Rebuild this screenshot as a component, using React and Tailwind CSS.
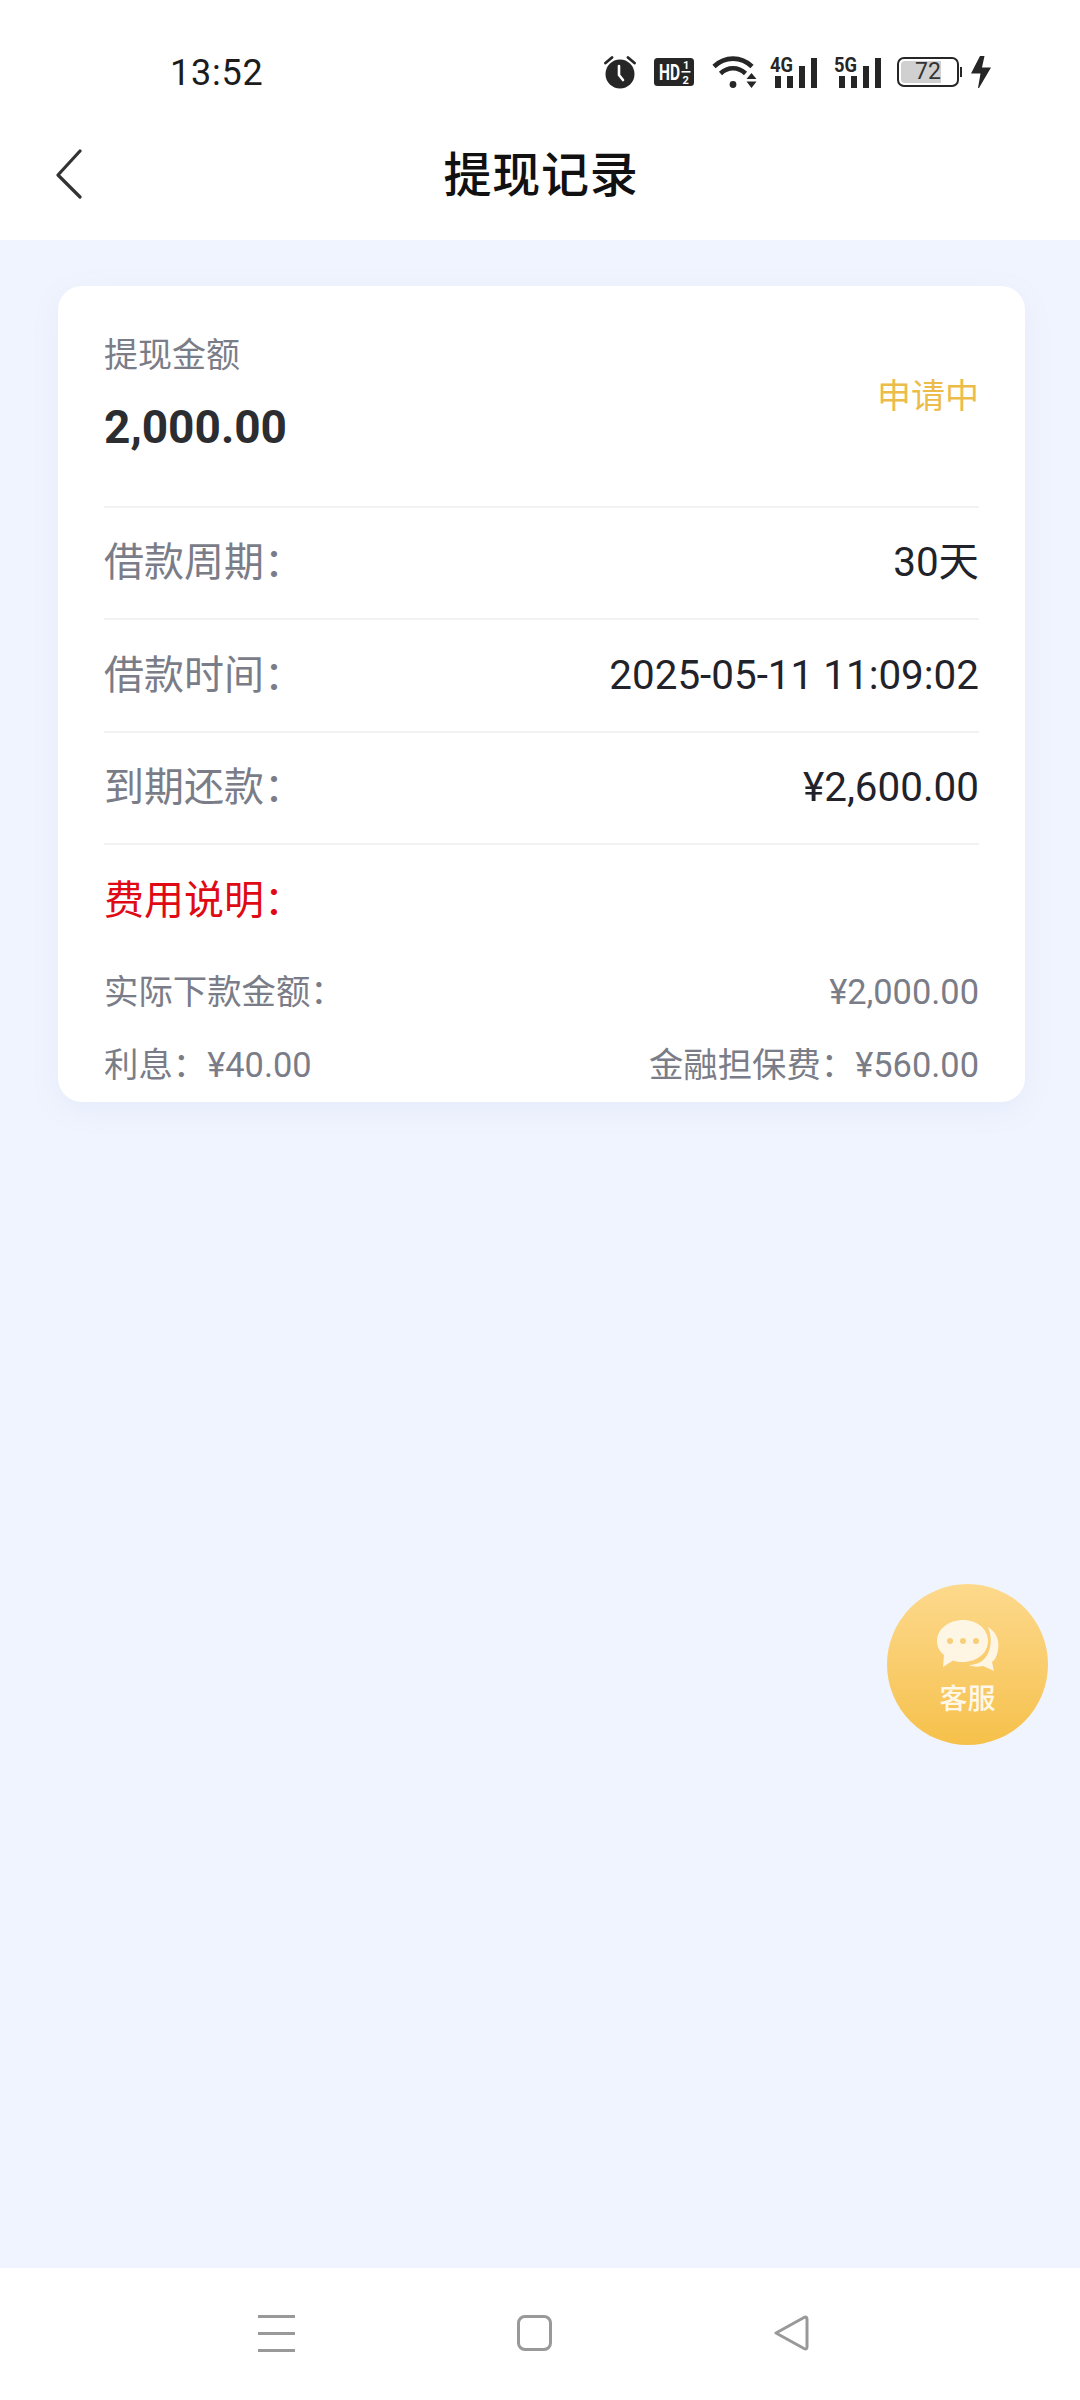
function Alarm() {
  return (
    <svg width="32" height="34" viewBox="0 0 32 34" className="block">
      <circle cx="16" cy="19" r="14.5" fill="#262626" />
      <path d="M15 11 L15 20 L19 25" fill="none" stroke="#fff" strokeWidth="2.6" strokeLinecap="round" strokeLinejoin="round" />
      <path d="M1.5 8 L8 2.5 M30.5 8 L24 2.5" stroke="#262626" strokeWidth="2.8" strokeLinecap="round" />
    </svg>
  );
}

function Hd() {
  return (
    <svg width="40" height="28" viewBox="0 0 40 28" className="block">
      <rect width="40" height="28" rx="3.5" fill="#262626" />
      <text transform="translate(5 22) scale(1 1.45)" fill="#fff" fontFamily="Roboto" fontWeight="700" fontSize="15.5">HD</text>
      <text x="29" y="11" fill="#fff" fontFamily="Roboto" fontWeight="700" fontSize="11">1</text>
      <rect x="27.5" y="13" width="9" height="1.6" fill="#fff" />
      <text x="28.5" y="26" fill="#fff" fontFamily="Roboto" fontWeight="700" fontSize="11">2</text>
    </svg>
  );
}

function Wifi() {
  return (
    <svg width="45" height="34" viewBox="0 0 45 34" className="block">
      <path d="M2 11.5 C13 1 29 1 40 11.5" fill="none" stroke="#262626" strokeWidth="4.6" />
      <path d="M8.5 18.5 C16 11.5 26 11.5 33.5 18.5" fill="none" stroke="#262626" strokeWidth="4.6" />
      <circle cx="21" cy="29.5" r="3.4" fill="#262626" />
      <path d="M39.5 18 L44.5 24 L34.5 24 Z M34.5 26.5 L44.5 26.5 L39.5 33 Z" fill="#262626" />
    </svg>
  );
}

function Signal({ label }) {
  return (
    <svg width="47" height="33" viewBox="0 0 47 33" className="block overflow-visible">
      <text x="0" y="15.5" fill="#262626" fontFamily="Roboto" fontWeight="700" fontSize="21" textLength="23" lengthAdjust="spacingAndGlyphs">{label}</text>
      <rect x="5" y="20" width="6" height="12" fill="#262626" />
      <rect x="17" y="20" width="6" height="12" fill="#262626" />
      <rect x="29" y="10" width="6" height="22" fill="#262626" />
      <rect x="41" y="2" width="6" height="30" fill="#262626" />
    </svg>
  );
}

function Battery() {
  return (
    <div className="relative w-[65px] h-[30px]">
      <div className="absolute left-0 top-0 w-[62px] h-[30px] rounded-[7px] border-[2px] border-[#262626]" />
      <div className="absolute left-[4px] top-[4px] w-[40px] h-[22px] rounded-l-[4px] bg-[#d0d0d0]" />
      <div className="absolute right-0 top-[10px] w-[2px] h-[10px] bg-[#262626]" />
      <div className="absolute left-0 top-0 w-[62px] h-[30px] flex items-center justify-center text-[23px] leading-[30px] text-[#333]">72</div>
    </div>
  );
}

function Bolt() {
  return (
    <svg width="20" height="32" viewBox="0 0 20 32" className="block">
      <path d="M9 0 L13.5 0 L11 11.5 L20 11.5 L8 32 L7 32 L9.5 17.5 L0 17.5 Z" fill="#262626" />
    </svg>
  );
}

function Row({ label, value }) {
  return (
    <div className="h-[112.4px] flex items-center justify-between border-b-[2px] border-[#f1f2f4] text-[40px] leading-[50px]">
      <span className="text-[#7a7d88]">{label}</span>
      <span className="text-[#22232a] text-[40.4px]">{value}</span>
    </div>
  );
}

export default function App() {
  return (
    <div className="relative w-[1080px] h-[2400px] flex flex-col bg-[#f0f4fe] overflow-hidden font-['Roboto','Noto_Sans_CJK_SC',sans-serif]">
      <header className="h-[240px] shrink-0 bg-white flex flex-col">
        <div className="h-[144px] pt-[52px] pl-[170px] pr-[89px] flex items-start justify-between">
          <span className="text-[36px] leading-[42px] tracking-[0.8px] text-[#1c1c1c]">13:52</span>
          <div className="flex items-center h-[40px]">
            <Alarm />
            <div className="ml-[18px]"><Hd /></div>
            <div className="ml-[18px]"><Wifi /></div>
            <div className="ml-[13px]"><Signal label="4G" /></div>
            <div className="ml-[17px]"><Signal label="5G" /></div>
            <div className="ml-[16px]"><Battery /></div>
            <div className="ml-[9px]"><Bolt /></div>
          </div>
        </div>
        <div className="relative flex-1 flex items-start justify-center">
          <svg width="30" height="50" viewBox="0 0 30 50" className="absolute left-[54px] top-[5px]">
            <path d="M26 2 L4 26 L26 48" fill="none" stroke="#333" strokeWidth="3.2" strokeLinecap="round" strokeLinejoin="round" />
          </svg>
          <h1 className="pl-[2px] text-[48px] leading-[64px] tracking-[0.8px] font-medium text-[#111]">提现记录</h1>
        </div>
      </header>

      <main className="flex-1 pl-[58px] pr-[55px] pt-[46px]">
        <section className="h-[816px] bg-white rounded-[24px] px-[46px] shadow-[0_8px_30px_rgba(120,140,220,0.08)] overflow-hidden">
          <div className="h-[222px] border-b-[2px] border-[#f1f2f4] flex items-center justify-between">
            <div className="flex flex-col gap-[19px] -mt-[1px]">
              <span className="text-[34px] leading-[44px] text-[#7a7d88]">提现金额</span>
              <span className="text-[46px] leading-[62px] font-bold text-[#2c2d30]">2,000.00</span>
            </div>
            <span className="text-[34px] leading-[44px] text-[#ebbc4a]">申请中</span>
          </div>
          <Row label="借款周期：" value="30天" />
          <Row label="借款时间：" value="2025-05-11 11:09:02" />
          <Row label="到期还款：" value="¥2,600.00" />
          <div className="pt-[31px] text-[40px] leading-[50px] text-[#e00a14]">费用说明：</div>
          <div className="mt-[44px] flex items-center justify-between text-[34.4px] leading-[44px] text-[#7a7d88]">
            <span>实际下款金额：</span>
            <span>¥2,000.00</span>
          </div>
          <div className="mt-[29px] flex items-center justify-between text-[34.4px] leading-[44px] text-[#7a7d88]">
            <span>利息：¥40.00</span>
            <span>金融担保费：¥560.00</span>
          </div>
        </section>
      </main>

      <nav className="h-[132px] shrink-0 bg-white flex items-center justify-between pl-[258px] pr-[271px] pb-[2px]">
        <div className="w-[37px] flex flex-col gap-[14px]">
          <div className="h-[3px] bg-[#999]" />
          <div className="h-[3px] bg-[#999]" />
          <div className="h-[3px] bg-[#999]" />
        </div>
        <div className="w-[35px] h-[36px] rounded-[8px] border-[3px] border-[#999]" />
        <svg width="35" height="36" viewBox="0 0 35 36" className="block">
          <path d="M2 18 L30 2.5 Q33 1 33 4.5 L33 31.5 Q33 35 30 33.5 Z" fill="none" stroke="#999" strokeWidth="3" strokeLinejoin="round" />
        </svg>
      </nav>

      <div className="absolute left-[887px] top-[1584px] w-[161px] h-[161px] rounded-full bg-gradient-to-b from-[#fdd98c] to-[#f6c149] flex flex-col items-center pt-[34px]">
        <svg width="64" height="56" viewBox="0 0 64 56" className="block">
          <path d="M52 9 C60 14 64 22 62 32 C61 38 59 42 56 44 L58 53 L47 48 C42 49 37 49 33 47 C42 47 50 42 53 33 C56 25 55 16 52 9 Z" fill="#fff" fillOpacity="0.8" />
          <path d="M27 2 C41 2 52 11 52 23 C52 35 41 44 27 44 C23 44 20 43.5 17 42.5 L7 49 L8 37 C3 33 1 28 1 23 C1 11 13 2 27 2 Z" fill="#fff" fillOpacity="0.8" />
          <circle cx="14" cy="23" r="3" fill="#f7cf78" />
          <circle cx="27" cy="23" r="3" fill="#f7cf78" />
          <circle cx="40" cy="23" r="3" fill="#f7cf78" />
        </svg>
        <span className="mt-[8px] text-[28px] leading-[36px] font-medium text-[#fff8e8]">客服</span>
      </div>
    </div>
  );
}
